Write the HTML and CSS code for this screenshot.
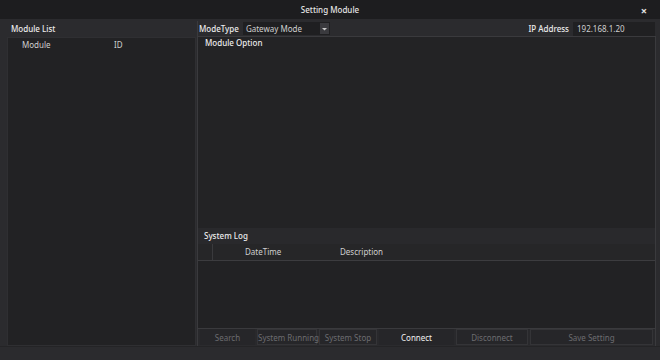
FILE: index.html
```html
<!DOCTYPE html>
<html lang="en">

<head>
    <meta charset="UTF-8">
    <title>Setting Module</title>
    <link rel="stylesheet" href="styles.css">
</head>

<body>
    <div class="window">
        <header class="titlebar">
            <span class="title">Setting Module</span>
            <span class="close">&times;</span>
        </header>

        <div class="content">
            <div class="module-list">
                <div class="panel-title">Module List</div>
                <div class="list-box">
                    <div class="list-head">
                        <span class="col-module">Module</span>
                        <span class="col-id">ID</span>
                    </div>
                </div>
            </div>

            <div class="main">
                <div class="toolbar">
                    <span class="label">ModeType</span>
                    <div class="combo">
                        <span>Gateway Mode</span>
                        <span class="combo-arrow">
                            <svg width="5" height="4" viewBox="0 0 5 4"><path d="M0 1h5L2.5 3.5z" fill="#c8c8c8"/></svg>
                        </span>
                    </div>
                    <div class="spacer"></div>
                    <span class="label">IP Address</span>
                    <div class="ip-box">192.168.1.20</div>
                </div>

                <div class="main-box">
                    <div class="option-area">
                        <div class="option-title">Module Option</div>
                    </div>

                    <div class="log-title">System Log</div>
                    <div class="log-head">
                        <span class="log-check"></span>
                        <span class="col-date">DateTime</span>
                        <span class="col-desc">Description</span>
                    </div>
                    <div class="log-body"></div>

                    <div class="buttons">
                        <button class="btn off w-search">Search</button>
                        <button class="btn off w-run">System Running</button>
                        <button class="btn off w-stop">System Stop</button>
                        <button class="btn on w-conn">Connect</button>
                        <button class="btn off w-disc">Disconnect</button>
                        <button class="btn off w-save">Save Setting</button>
                    </div>
                </div>
            </div>
        </div>
    </div>
</body>

</html>
```

FILE: styles.css
```css
body {
    margin: 0;
    background-color: #2b2b2e;
    font-family: 'Noto Sans', 'Open Sans', sans-serif;
    font-size: 8px;
    color: #d8d8d8;
}

.window {
    width: 660px;
    height: 360px;
    display: flex;
    flex-direction: column;
    background-color: #2b2b2e;
}

.titlebar {
    height: 19px;
    background-color: #1d1d1f;
    display: flex;
    align-items: center;
    justify-content: center;
    position: relative;
}

.title {
    font-weight: 500;
    color: #e6e6e6;
}

.close {
    position: absolute;
    right: 13px;
    top: 3px;
    font-size: 11px;
    font-weight: 700;
    color: #e0e0e0;
}

.content {
    display: flex;
    padding: 2px 4px 0 5px;
    height: 325px;
    border-bottom: 1px solid #242426;
}

/* Left side */
.module-list {
    width: 192px;
    display: flex;
    flex-direction: column;
    border-right: 1px solid #3a3a3d;
}

.panel-title {
    font-weight: 500;
    color: #ececec;
    height: 16px;
    line-height: 16px;
    padding-left: 6px;
}

.list-box {
    flex: 1;
    margin: 0 1px 0 2px;
    background-color: #222224;
    border: 1px solid #2f2f32;
}

.list-head {
    display: flex;
    height: 14px;
    line-height: 14px;
    color: #cfcfcf;
}

.col-module {
    width: 92px;
    padding-left: 14px;
}

/* Right side */
.main {
    flex: 1;
    display: flex;
    flex-direction: column;
}

.toolbar {
    display: flex;
    align-items: center;
    height: 15px;
    padding-left: 1px;
    padding-right: 1px;
    border-bottom: 1px solid #3a3a3d;
}

.label {
    font-weight: 500;
    color: #ececec;
    margin-right: 4px;
}

.combo {
    width: 84px;
    height: 13px;
    background-color: #1f1f21;
    display: flex;
    align-items: center;
    justify-content: space-between;
    padding-left: 3px;
    color: #cfcfcf;
}

.combo-arrow {
    width: 9px;
    height: 11px;
    margin-right: 1px;
    background-color: #3a3a3e;
    display: flex;
    align-items: center;
    justify-content: center;
}

.spacer {
    flex: 1;
}

.ip-box {
    width: 78px;
    height: 14px;
    line-height: 14px;
    padding-left: 4px;
    background-color: #202022;
    color: #cfcfcf;
}

.main-box {
    flex: 1;
    display: flex;
    flex-direction: column;
    border-right: 1px solid #3a3a3d;
}

.option-area {
    height: 191px;
    background-color: #232325;
}

.option-title {
    font-weight: 500;
    color: #ececec;
    line-height: 12px;
    padding-left: 7px;
}

.log-title {
    height: 16px;
    line-height: 16px;
    padding-left: 6px;
    font-weight: 500;
    color: #ececec;
    background-color: #29292c;
}

.log-head {
    display: flex;
    height: 16px;
    line-height: 16px;
    background-color: #262628;
    border-bottom: 1px solid #3c3c3f;
    color: #cfcfcf;
}

.log-check {
    width: 14px;
    border-right: 1px solid #3a3a3d;
    margin-right: 32px;
}

.col-date {
    width: 95px;
}

.log-body {
    height: 67px;
    background-color: #222224;
}

.buttons {
    display: flex;
    gap: 2px;
    height: 16px;
    padding: 0 2px;
    border-top: 1px solid #3a3a3d;
    background-color: #29292c;
}

.btn {
    height: 16px;
    border: 1px solid #343437;
    background-color: #262629;
    font-family: inherit;
    font-size: 8px;
    padding: 0;
    white-space: nowrap;
}

.btn.off {
    color: #6c6c70;
}

.btn.on {
    color: #f0f0f0;
}

.w-search { width: 55px; border-color: transparent; }
.w-run { width: 60px; }
.w-stop { width: 58px; }
.w-conn { width: 75px; border-color: transparent; }
.w-disc { width: 72px; }
.w-save { flex: 1; }
```
